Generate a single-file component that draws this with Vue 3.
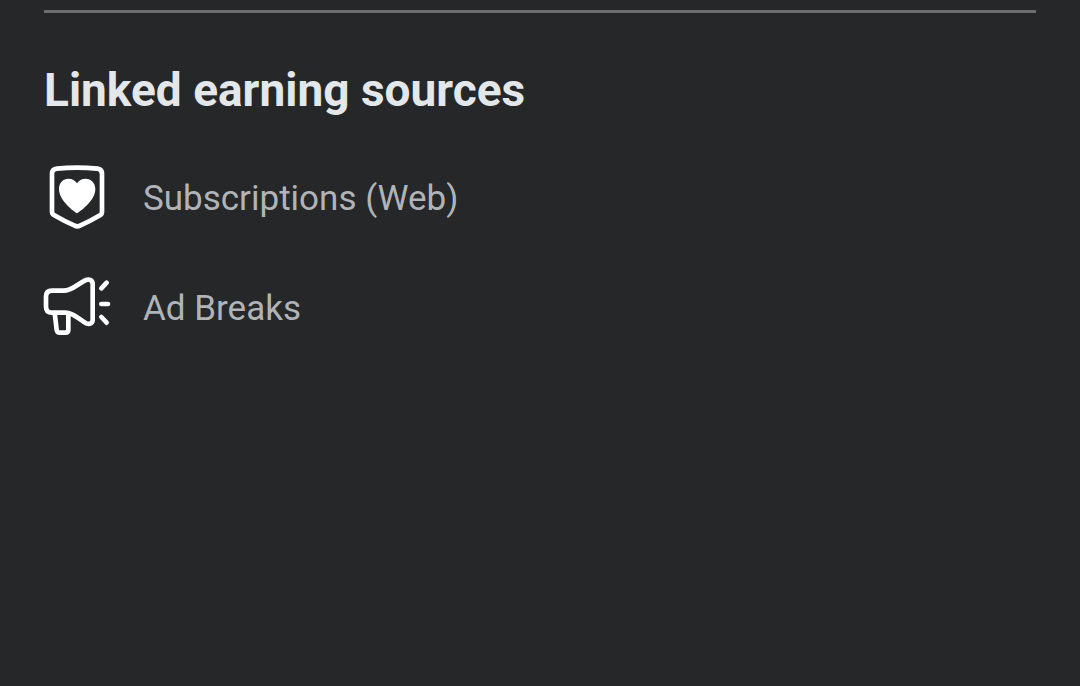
<script setup>
const sources = [
  { id: 'subscriptions', label: 'Subscriptions (Web)' },
  { id: 'ads', label: 'Ad Breaks' },
]
</script>

<template>
  <main class="panel">
    <hr class="divider" />
    <h2 class="title">Linked earning sources</h2>
    <ul class="sources">
      <li v-for="source in sources" :key="source.id" class="source">
        <svg v-if="source.id === 'subscriptions'" class="icon" viewBox="24 24 198 210" aria-hidden="true">
          <path class="line" d="M63 41 Q123 35 184 41 Q198 43 198 56 V170 Q198 177 192 181 Q160 200 132 212 Q124 216 116 212 Q87 200 55 181 Q48 177 48 170 V56 Q48 43 63 41 Z" />
          <path class="solid" d="M123 175 C113 169 69 137 69 102 C69 82 82 71 97 71 C109 71 118 76 123 85 C128 76 137 71 149 71 C164 71 178 82 178 102 C178 137 133 169 123 175 Z" />
        </svg>
        <svg v-else class="icon" viewBox="24 24 198 210" aria-hidden="true">
          <path class="line" d="M48 77 H82 C110 77 126 55 150 45 C160 41 170 46 170 57 V165 C170 175 161 179 151 175 C132 166 114 143 88 143 H48 Q30 143 30 125 V95 Q30 77 48 77 Z" />
          <path class="line" d="M56 144 L62 194 Q63 203 72 203 H88 Q97 203 97 194 V145" />
          <path class="line" d="M196 70 L212 53 M196 117 H216 M196 156 L212 173" />
        </svg>
        <span class="label">{{ source.label }}</span>
      </li>
    </ul>
  </main>
</template>

<style>
body {
  margin: 0;
  background: #252729;
}
</style>

<style scoped>
.panel {
  padding: 10px 44px;
  font-family: Roboto, sans-serif;
}
.divider {
  height: 3px;
  margin: 0;
  border: 0;
  background: #6b6c6d;
}
.title {
  margin: 50px 0 45px;
  font-size: 46px;
  line-height: 55px;
  font-weight: 700;
  color: #e4e7ea;
}
.sources {
  display: flex;
  flex-direction: column;
  gap: 40px;
  margin: 0;
  padding: 0;
  list-style: none;
}
.source {
  display: flex;
  align-items: center;
  gap: 33px;
}
.icon {
  flex: none;
  width: 66px;
  height: 70px;
  overflow: visible;
}
.line {
  fill: none;
  stroke: #fff;
  stroke-width: 14;
  stroke-linecap: round;
  stroke-linejoin: round;
}
.solid {
  fill: #fff;
}
.label {
  padding-top: 2px;
  font-size: 35px;
  line-height: 44px;
  color: #b0b3b7;
}
</style>
